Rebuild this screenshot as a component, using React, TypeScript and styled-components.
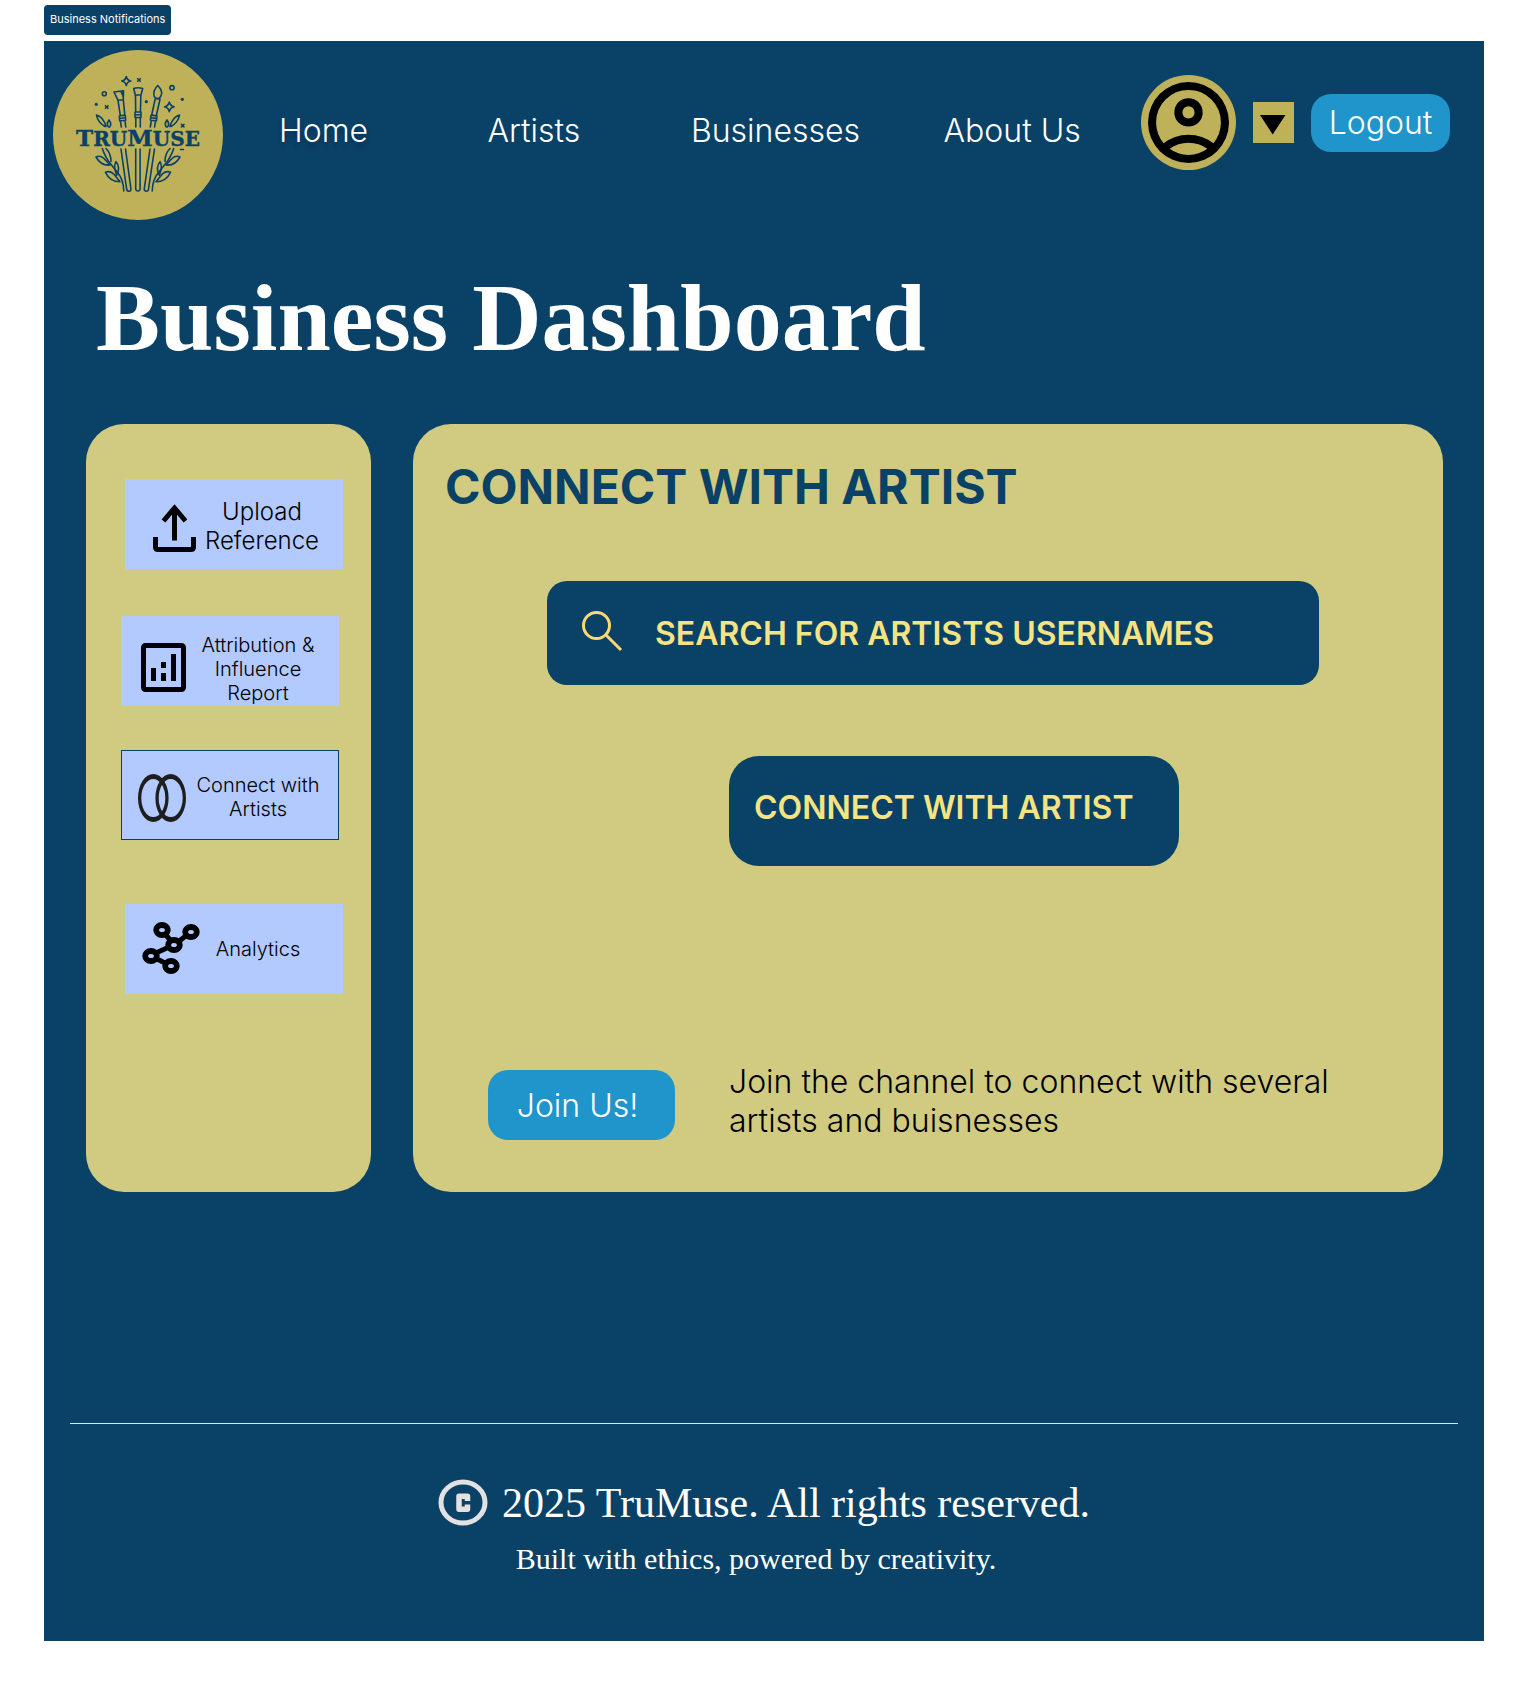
import React from "react";
import styled, { createGlobalStyle } from "styled-components";

const navy = "#0a4167";
const gold = "#bfb15a";
const sand = "#d0cb80";
const sky = "#1f95cb";
const lavender = "#b2caff";
const lemon = "#f5e384";

const sans = `Inter, "Liberation Sans", sans-serif`;
const serif = `"Liberation Serif", "Times New Roman", serif`;

const GlobalStyle = createGlobalStyle`
  *, *::before, *::after { box-sizing: border-box; }
  body { margin: 0; background: #fff; font-family: ${sans}; }
  h1, h2, p, ul { margin: 0; padding: 0; }
  button, input { font: inherit; }
`;

const Page = styled.div`
  padding: 5px 40px 41px 44px;
`;

const Tag = styled.p`
  width: fit-content;
  padding: 6px 6px 8px;
  border-radius: 4px;
  background: ${navy};
  color: #fff;
  font-size: 11px;
  line-height: 16px;
`;

const Frame = styled.div`
  margin-top: 6px;
  background: ${navy};
`;

const Header = styled.header`
  display: flex;
  align-items: flex-start;
  padding: 9px 34px 0 9px;
`;

const LogoLink = styled.a`
  flex: none;
  display: block;
  width: 170px;
  height: 170px;
  border-radius: 50%;
  background: ${gold};
`;

const Nav = styled.nav`
  flex: 1;
  display: grid;
  grid-template-columns: 208fr 203fr 252fr 197fr;
  padding: 61px 0 0 56px;
`;

const NavLink = styled.a<{ $current?: boolean }>`
  color: #fff;
  font-size: 32px;
  font-weight: 300;
  line-height: 39px;
  text-decoration: none;
  white-space: nowrap;
  text-shadow: ${(p) => (p.$current ? "0 4px 4px rgba(0, 0, 0, 0.25)" : "none")};
`;

const Actions = styled.div`
  display: flex;
  align-items: center;
  gap: 17px;
  padding-top: 25px;
`;

const Avatar = styled.button`
  display: grid;
  place-items: center;
  width: 95px;
  height: 95px;
  padding: 0;
  border: 0;
  border-radius: 50%;
  background: ${gold};
`;

const MenuToggle = styled.button`
  display: grid;
  place-items: center;
  width: 41px;
  height: 41px;
  padding: 5px 2px 0 0;
  border: 0;
  background: ${gold};
`;

const SkyButton = styled.button<{ $width: number; $height: number; $shift?: number }>`
  width: ${(p) => p.$width}px;
  height: ${(p) => p.$height}px;
  padding: 0 ${(p) => p.$shift ?? 0}px 0 0;
  border: 0;
  border-radius: 20px;
  background: ${sky};
  color: #fff;
  font-size: 32px;
  font-weight: 300;
  line-height: 39px;
`;

const Title = styled.h1`
  padding: 43px 52px 51px;
  color: #fff;
  font-family: ${serif};
  font-size: 96px;
  font-weight: 700;
  line-height: 110px;
`;

const Columns = styled.div`
  display: grid;
  grid-template-columns: 285px 1fr;
  gap: 42px;
  padding: 0 41px 0 42px;
`;

const Sidebar = styled.aside`
  border-radius: 38px;
  background: ${sand};
`;

const Menu = styled.ul`
  list-style: none;
`;

const MenuItem = styled.li<{ $before: number; $inset: number }>`
  padding: ${(p) => `${p.$before}px 0 0 ${p.$inset}px`};
`;

const MenuButton = styled.button<{ $active?: boolean }>`
  display: flex;
  align-items: center;
  width: 218px;
  height: 90px;
  padding: 0;
  border: 0;
  background: ${lavender};
  box-shadow: ${(p) => (p.$active ? `inset 0 0 0 1px ${navy}` : "none")};
  color: #000;
`;

const MenuIcon = styled.svg`
  flex: none;
  width: 62px;
  height: 90px;
  margin-left: 12px;
`;

const MenuLabel = styled.span<{ $large?: boolean; $low?: boolean; $short?: boolean }>`
  align-self: ${(p) => (p.$low ? "flex-end" : "center")};
  width: ${(p) => (p.$short ? 118 : 126)}px;
  padding: ${(p) => (p.$low ? "0 0 1px" : p.$short ? "0" : "4px 0 0")};
  font-size: ${(p) => (p.$large ? 24 : 20)}px;
  font-weight: 300;
  line-height: ${(p) => (p.$large ? 29 : 24)}px;
  text-align: center;
`;

const Panel = styled.main`
  padding: 34px 34px 52px 32px;
  border-radius: 38px;
  background: ${sand};
`;

const PanelTitle = styled.h2`
  color: ${navy};
  font-size: 48px;
  font-weight: 700;
  line-height: 58px;
`;

const SearchBox = styled.label`
  display: flex;
  align-items: center;
  gap: 32px;
  height: 104px;
  margin: 65px 90px 0 102px;
  padding: 0 34px;
  border-radius: 20px;
  background: ${navy};
`;

const SearchIcon = styled.svg`
  flex: none;
  width: 42px;
  height: 46px;
`;

const SearchInput = styled.input`
  flex: 1;
  min-width: 0;
  padding: 0;
  border: 0;
  outline: 0;
  background: none;
  color: ${lemon};
  font-size: 32px;
  font-weight: 600;
  line-height: 39px;
  &::placeholder { color: ${lemon}; opacity: 1; }
`;

const ConnectButton = styled.button`
  display: block;
  width: 450px;
  margin: 71px 0 0 284px;
  padding: 32px 25px 39px;
  border: 0;
  border-radius: 30px;
  background: ${navy};
  color: ${lemon};
  font-size: 32px;
  font-weight: 600;
  line-height: 39px;
  text-align: left;
  white-space: nowrap;
`;

const JoinRow = styled.div`
  display: grid;
  grid-template-columns: 241px 1fr;
  align-items: end;
  margin: 196px 0 0 43px;
`;

const JoinText = styled.p`
  max-width: 640px;
  color: #000;
  font-size: 32px;
  font-weight: 300;
  line-height: 39px;
`;

const Footer = styled.footer`
  margin: 231px 26px 0;
  padding: 55px 0 60px;
  border-top: 1px solid #dfe5ea;
  color: #fff;
  font-family: ${serif};
  text-align: center;
`;

const Rights = styled.p`
  display: flex;
  align-items: center;
  justify-content: center;
  gap: 14px;
  font-size: 42px;
  line-height: 48px;
`;

const Motto = styled.p`
  padding: 12px 16px 2px 0;
  font-size: 30px;
  line-height: 40px;
`;

function Sprig() {
  return (
    <g>
      <path d="M43.500 65q1 7 8.500 11.500M43.500 65q7 2 9.500 11.500M56 70q-3 4-.500 7M56 70q3 4 .700 7" />
      <path d="M49.300 98.500q3 9 8 15 4 5 8 10 5 6 5.500 17.500" />
      <path d="M53 98.500q5 5 5 13M43 107q4-2 8 1.500l6 6.500q-9 1-14-8z" />
      <path d="M52.500 122.300q4-2 8 1.500l6.500 8q-10 0-14.500-9.500zM63 111.700q-3 5 .700 13.500 4-8-.700-13.500z" />
    </g>
  );
}

function Logo() {
  return (
    <svg width="170" height="170" viewBox="0 0 170 170" role="img" aria-label="TruMuse">
      <g fill="none" stroke={navy} strokeWidth="1.6" strokeLinejoin="round" strokeLinecap="round">
        <path d="M73.300 26.500q.8 3.700 4.500 4.500-3.700.8-4.500 4.500-.8-3.700-4.500-4.500 3.700-.8 4.500-4.500z" />
        <path d="M116.300 52q.9 3.900 4.800 4.800-3.900.9-4.800 4.800-.9-3.900-4.800-4.800 3.900-.9 4.800-4.800z" />
        <circle cx="51.300" cy="43.700" r="2" />
        <circle cx="119" cy="37.700" r="2.100" />
        <path d="M84.700 28.700l2.600 2.600m0-2.600l-2.600 2.600M52.400 55.700l2.600 2.600m0-2.600l-2.600 2.600M128.400 74.400l2.600 2.600m0-2.600l-2.600 2.600" />
        <path d="M61 42l9.500-1.300-.2 9-5.300.6zM65 50.300l2.300 15.400 4.500-.6-1.500-15.400M66.300 66l6-.7.4 5-6 .7zM66.500 68.500l6-.7M67.500 71.500l.8 5.500M72 71l.8 6" />
        <path d="M80.700 38.500q4.500-1.500 9 0L88 45h-5.700zM82.500 45l.2 17h4.700l.5-17M82 62h6v5.500h-6zM82 64.700h6M82.800 68v9M87.300 68v9" />
        <path d="M104.800 35.500q5 5 3.500 9.500-1 3.500-3.500 3.500-3.500 0-4-4-.5-4.500 4-9zM102.300 48.500l-3.600 16.500 4.600.7 3.700-16.500zM98 65.200l6 .7-.6 5-6-.7zM97.700 67.700l6 .7M98.300 71l-1 6M102.500 71.500l-1 5.500" />
        <path d="M68 99l5.600 40q.5 2.300 2.500 2.200 2.200-.3 1.800-2.500L72.500 99M82.700 99v40q.3 2 2.200 2 2 0 2.200-2V99M97 99l-5.700 39.700q-.3 2.200 1.700 2.500 2 .2 2.500-2L101.500 99" />
        <Sprig />
        <g transform="matrix(-1 0 0 1 170 0)">
          <Sprig />
        </g>
        <path d="M127.500 99.500h3" />
      </g>
      <g fill={navy}>
        <path d="M67 41.500l3.300-.5-.1 7z" />
        <circle cx="43.300" cy="54.300" r="1.600" />
        <circle cx="93.300" cy="51.700" r="1.600" />
        <circle cx="129.300" cy="49.300" r="1.600" />
      </g>
      <text
        x="85"
        y="95.500"
        fill={navy}
        stroke={navy}
        strokeWidth="0.400"
        textAnchor="middle"
        fontFamily={`"DejaVu Serif", serif`}
        fontWeight="700"
        fontSize="23"
      >
        T<tspan fontSize="20">RU</tspan>M<tspan fontSize="20">USE</tspan>
      </text>
    </svg>
  );
}

const UploadIcon = (
  <MenuIcon viewBox="0 0 62 90" fill="none" stroke="#000" strokeWidth="5">
    <path d="M18.500 58v10q0 2.500 2.500 2.500h33q2.500 0 2.500-2.500V58M37.500 61.500V31M26.500 42l11-13 11 13" />
  </MenuIcon>
);

const ReportIcon = (
  <MenuIcon viewBox="0 0 62 90">
    <rect x="10.500" y="29.500" width="40" height="44" rx="2" fill="none" stroke="#000" strokeWidth="5" />
    <path d="M18 52h5v13h-5zM28 46h5v6h-5zM28 57h5v8h-5zM38 38h5v27h-5z" />
  </MenuIcon>
);

const RingsIcon = (
  <MenuIcon viewBox="0 0 62 90" fill="#1e1e1e" fillRule="evenodd">
    <path d="M5 48a15.300 24 0 0 1 30.600 0a15.300 24 0 0 1-30.600 0zM8.300 48a12 19 0 0 0 24 0a12 19 0 0 0-24 0z" />
    <path d="M22.400 48a15.300 24 0 0 1 30.600 0a15.300 24 0 0 1-30.600 0zM25.700 48a12 19 0 0 0 24 0a12 19 0 0 0-24 0z" />
  </MenuIcon>
);

const nodes = [
  [25, 26],
  [54, 28],
  [37, 41],
  [14, 52],
  [34, 62],
];

const AnalyticsIcon = (
  <MenuIcon viewBox="0 0 62 90" fill="none" stroke="#000" strokeWidth="5" overflow="visible">
    <path d="M28 30l6 7M50 31l-9 7M32 43l-13 6M18 54l12 6" />
    {nodes.map(([x, y]) => (
      <ellipse key={x} cx={x} cy={y} rx="5.800" ry="5" fill={lavender} strokeWidth="5.800" />
    ))}
  </MenuIcon>
);

const menu = [
  { label: "Upload Reference", icon: UploadIcon, before: 55, inset: 39, large: true },
  { label: "Attribution & Influence Report", icon: ReportIcon, before: 47, inset: 35, low: true },
  { label: "Connect with Artists", icon: RingsIcon, before: 44, inset: 35, active: true },
  { label: "Analytics", icon: AnalyticsIcon, before: 64, inset: 39, short: true },
];

export default function App() {
  return (
    <Page>
      <GlobalStyle />
      <Tag>Business Notifications</Tag>
      <Frame>
        <Header>
          <LogoLink href="#home">
            <Logo />
          </LogoLink>
          <Nav>
            <NavLink href="#home" $current>Home</NavLink>
            <NavLink href="#artists">Artists</NavLink>
            <NavLink href="#businesses">Businesses</NavLink>
            <NavLink href="#about">About Us</NavLink>
          </Nav>
          <Actions>
            <Avatar aria-label="Account">
              <svg width="81" height="81" viewBox="80 -880 800 800">
                <path d="M234-276q51-39 114-61.500T480-360q69 0 132 22.500T726-276q35-41 54.500-93T800-480q0-133-93.500-226.500T480-800q-133 0-226.500 93.500T160-480q0 59 19.500 111t54.500 93Zm246-164q-59 0-99.500-40.500T340-580q0-59 40.500-99.500T480-720q59 0 99.500 40.500T620-580q0 59-40.500 99.500T480-440Zm0 360q-83 0-156-31.500T197-197q-54-54-85.500-127T80-480q0-83 31.500-156T197-763q54-54 127-85.500T480-880q83 0 156 31.500T763-763q54 54 85.500 127T880-480q0 83-31.500 156T763-197q-54 54-127 85.500T480-80Zm0-80q53 0 100-15.500t86-44.500q-39-29-86-44.500T480-280q-53 0-100 15.500T294-220q39 29 86 44.500T480-160Zm0-360q26 0 43-17t17-43q0-26-17-43t-43-17q-26 0-43 17t-17 43q0 26 17 43t43 17Z" />
              </svg>
            </Avatar>
            <MenuToggle aria-label="Open account menu">
              <svg width="26" height="20" viewBox="0 0 26 20">
                <path d="M0 0h25.500L12.700 19.500z" />
              </svg>
            </MenuToggle>
            <SkyButton $width={139} $height={58}>Logout</SkyButton>
          </Actions>
        </Header>

        <Title>Business Dashboard</Title>

        <Columns>
          <Sidebar>
            <Menu>
              {menu.map((item) => (
                <MenuItem key={item.label} $before={item.before} $inset={item.inset}>
                  <MenuButton $active={item.active}>
                    {item.icon}
                    <MenuLabel $large={item.large} $low={item.low} $short={item.short}>
                      {item.label}
                    </MenuLabel>
                  </MenuButton>
                </MenuItem>
              ))}
            </Menu>
          </Sidebar>

          <Panel>
            <PanelTitle>CONNECT WITH ARTIST</PanelTitle>
            <SearchBox>
              <SearchIcon viewBox="0 0 42 46" fill="none" stroke="#fcd974" strokeWidth="3">
                <circle cx="15.500" cy="15.500" r="13" />
                <path d="M24.500 24.500L40 40" />
              </SearchIcon>
              <SearchInput
                type="search"
                aria-label="Search for artists usernames"
                placeholder="SEARCH FOR ARTISTS USERNAMES"
              />
            </SearchBox>
            <ConnectButton>CONNECT WITH ARTIST</ConnectButton>
            <JoinRow>
              <SkyButton $width={187} $height={70} $shift={8}>Join Us!</SkyButton>
              <JoinText>Join the channel to connect with several artists and buisnesses</JoinText>
            </JoinRow>
          </Panel>
        </Columns>

        <Footer>
          <Rights>
            <svg width="50" height="48" viewBox="0 0 50 48" fill="none" stroke="#e3e1e1" role="img" aria-label="Copyright">
              <ellipse cx="25" cy="23.500" rx="22" ry="20.500" strokeWidth="5" />
              <path d="M29.500 22v-4.700h-8.500v13h8.500v-4.700" strokeWidth="5.500" strokeLinejoin="round" />
            </svg>
            2025 TruMuse. All rights reserved.
          </Rights>
          <Motto>Built with ethics, powered by creativity.</Motto>
        </Footer>
      </Frame>
    </Page>
  );
}
